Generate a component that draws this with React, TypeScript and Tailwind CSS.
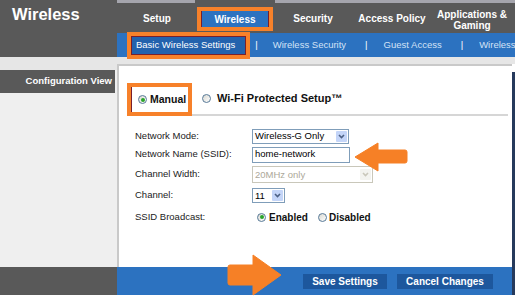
import React from 'react'

function Radio({ checked }: { checked?: boolean }) {
  return (
    <span className="flex h-[9px] w-[9px] shrink-0 items-center justify-center rounded-full border border-[#587a98] bg-gradient-to-br from-[#d8d8d2] to-white">
      {checked && <span className="h-[4px] w-[4px] rounded-full bg-[#2aa52a]" />}
    </span>
  )
}

function Chevron({ disabled }: { disabled?: boolean }) {
  return (
    <svg width="7" height="5" viewBox="0 0 7 5">
      <path d="M1 1l2.5 2.5L6 1" fill="none" stroke={disabled ? '#c9c7ba' : '#4d6185'} strokeWidth="1.6" />
    </svg>
  )
}

function Select({ value, className, disabled }: { value: string; className: string; disabled?: boolean }) {
  return (
    <div
      className={`flex items-center bg-white ${
        disabled ? 'border border-[#c9c7ba] text-[#aca899]' : 'border border-[#7f9db9] text-black'
      } ${className}`}
    >
      <span className="flex-1 pl-[2px] leading-none whitespace-nowrap">{value}</span>
      <span
        className={`mr-[1px] flex h-[11px] w-[11px] items-center justify-center rounded-[1px] ${
          disabled ? 'bg-[#f3f3ef]' : 'bg-[#c4d5f8]'
        }`}
      >
        <Chevron disabled={disabled} />
      </span>
    </div>
  )
}

export default function App() {
  return (
    <div className="relative h-[301px] w-[531px] overflow-hidden bg-white font-['Liberation_Sans',Arial,sans-serif]">
      <div className="flex h-[295px] w-[515px]">
        {/* left column */}
        <div className="flex w-[117px] shrink-0 flex-col bg-[#efefef]">
          <div className="h-[57px] bg-[#595959] pl-[12px] pt-[4px] text-[16.5px] font-bold leading-[20px] text-white">
            Wireless
          </div>
          <div className="h-[13px] bg-[#e6e6e6]" />
          <div className="flex h-[23px] w-[115px] items-center justify-end bg-[#595959] pr-[3px] text-[9.5px] font-bold text-white">
            Configuration View
          </div>
          <div className="flex-1" />
          <div className="h-[28px] bg-[#595959]" />
        </div>

        {/* right column */}
        <div className="flex w-[398px] min-w-0 shrink-0 flex-col">
          <div className="flex h-[3px]">
            <div className="w-[78px] bg-[#a5a5ad]" />
            <div className="w-[80px] bg-[#595959]" />
            <div className="flex-1 bg-[#a5a5ad]" />
          </div>

          {/* main nav */}
          <nav className="flex h-[30px] items-center bg-[#595959] text-[10px] font-bold text-white">
            <div className="w-[80px] text-center">Setup</div>
            <div className="mt-[4px] flex h-[24px] w-[76px] self-start border-4 border-[#f7812a]">
              <div className="flex flex-1 items-center justify-center border-x border-[#7a1f2b] bg-[#2c72c0]">
                Wireless
              </div>
            </div>
            <div className="w-[80px] text-center">Security</div>
            <div className="w-[78px] text-center">Access Policy</div>
            <div className="mt-[4px] w-[82px] text-center leading-[11px]">
              Applications &amp;
              <br />
              Gaming
            </div>
          </nav>

          {/* sub nav */}
          <div className="flex h-[24px] items-center overflow-x-clip whitespace-nowrap bg-[#2c72c0] text-[9.5px] text-[#d3e2f6]">
            <div className="relative z-10 ml-[10px] mt-[1px] flex h-[27px] shrink-0 border-4 border-[#f7812a]">
              <div className="flex items-center border border-[#7a1f2b] bg-[#2362ad] pl-[4px] pr-[10px] text-white">
                Basic Wireless Settings
              </div>
            </div>
            <span className="ml-[5px] shrink-0 text-white">|</span>
            <span className="ml-[15px] shrink-0">Wireless Security</span>
            <span className="ml-[19px] shrink-0 text-white">|</span>
            <span className="ml-[16px] shrink-0">Guest Access</span>
            <span className="ml-[19px] shrink-0 text-white">|</span>
            <span className="ml-[16px] shrink-0">Wireless</span>
          </div>
          <div className="h-[7px] bg-[#e6e6e6]" />

          <div className="flex flex-1">
            <div className="flex min-w-0 flex-1 flex-col">
              {/* content panel */}
              <div className="flex-1 border-l-2 border-t-2 border-[#c9c9c9] bg-white">
                <div className="ml-[8px] mr-[4px] mt-[17px] flex h-[33px]">
                  <div className="flex w-[65px] border-4 border-[#f7812a]">
                    <div className="flex flex-1 items-center gap-[3px] whitespace-nowrap border-l border-[#7a1f2b] pl-[6px] text-[10.5px] font-bold text-[#111]">
                      <Radio checked />
                      <span>Manual</span>
                    </div>
                  </div>
                  <div className="flex flex-1 items-center gap-[6px] border-b-2 border-[#d6d6d6] pl-[10px] text-[11px] font-bold text-[#111]">
                    <Radio />
                    <span>Wi-Fi Protected Setup™</span>
                  </div>
                </div>

                <div className="mt-[11px] pl-[16px] text-[9.5px] text-[#222]">
                  <div className="flex h-[18px] items-center">
                    <span className="w-[117px]">Network Mode:</span>
                    <Select value="Wireless-G Only" className="h-[15px] w-[97px]" />
                  </div>
                  <div className="flex h-[19px] items-center">
                    <span className="w-[117px]">Network Name (SSID):</span>
                    <div className="flex h-[16px] w-[98px] items-center border border-[#7f9db9] bg-white pl-[2px] text-black">
                      home-network
                    </div>
                  </div>
                  <div className="flex h-[21px] items-center">
                    <span className="w-[117px]">Channel Width:</span>
                    <Select value="20MHz only" className="h-[17px] w-[121px]" disabled />
                  </div>
                  <div className="flex h-[21px] items-center">
                    <span className="w-[117px]">Channel:</span>
                    <Select value="11" className="h-[15px] w-[33px]" />
                  </div>
                  <div className="flex h-[22px] items-center">
                    <span className="w-[117px]">SSID Broadcast:</span>
                    <div className="flex items-center pl-[5px] text-[10px] font-bold text-[#111]">
                      <Radio checked />
                      <span className="ml-[3px]">Enabled</span>
                      <span className="ml-[10px]">
                        <Radio />
                      </span>
                      <span className="ml-[2px]">Disabled</span>
                    </div>
                  </div>
                </div>
              </div>

              {/* bottom bar */}
              <div className="flex h-[28px] items-center justify-end gap-[10px] bg-[#2c72c0] pr-[19px] text-[10px] font-bold text-white">
                <div className="flex h-[15px] w-[84px] items-center justify-center bg-[#1d579d]">Save Settings</div>
                <div className="flex h-[15px] w-[96px] items-center justify-center bg-[#1d579d]">Cancel Changes</div>
              </div>
            </div>
            <div className="w-[3px] shrink-0 pt-[8px]">
              <div className="h-full bg-[#263a5c]" />
            </div>
          </div>
        </div>
      </div>

      {/* annotation arrows */}
      <svg className="pointer-events-none absolute left-0 top-0" width="531" height="301" viewBox="0 0 531 301">
        <path
          d="M355 157 L378 143 L378 150 L405 150 Q407 150 407 152 L407 161 Q407 163 405 163 L378 163 L378 171 Z"
          fill="#f68026"
          stroke="#f68026"
          strokeLinejoin="round"
        />
        <path
          d="M230 265 L253 265 L253 255 L281 275 L253 295 L253 285 L230 285 Q228 285 228 283 L228 267 Q228 265 230 265 Z"
          fill="#f68026"
          stroke="#f68026"
          strokeLinejoin="round"
        />
      </svg>
    </div>
  )
}
